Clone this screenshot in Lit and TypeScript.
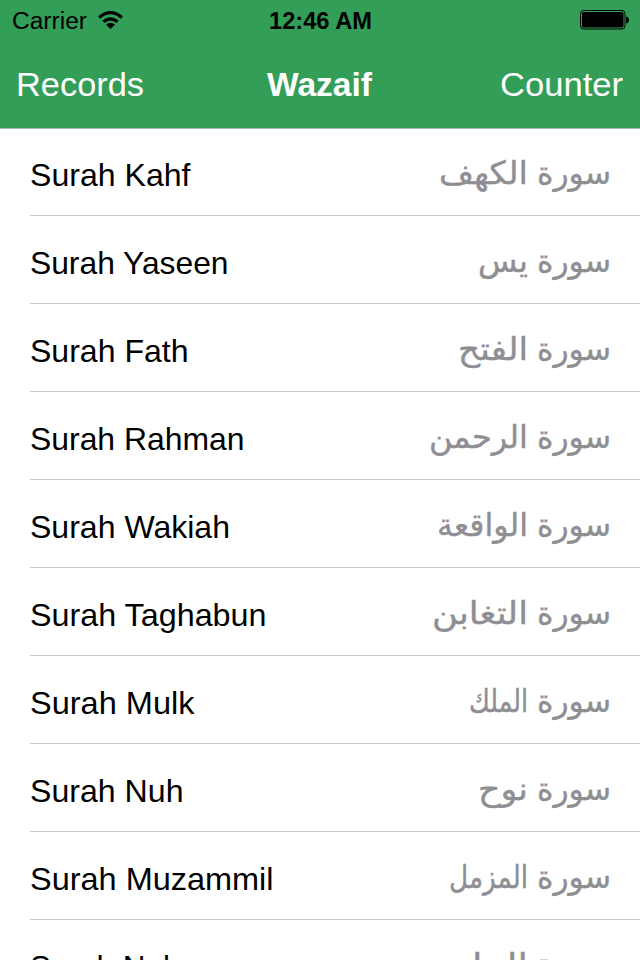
import { LitElement, html, css, svg } from "lit";
import { customElement } from "lit/decorators.js";

interface Surah {
  name: string;
  width: number;
  arabic: string;
  arabicWidth: number;
}

const SURAHS: Surah[] = [
  { name: "Surah Kahf", width: 160.5, arabic: "الكهف", arabicWidth: 89 },
  { name: "Surah Yaseen", width: 198.5, arabic: "يس", arabicWidth: 50 },
  { name: "Surah Fath", width: 158.5, arabic: "الفتح", arabicWidth: 70 },
  { name: "Surah Rahman", width: 214.5, arabic: "الرحمن", arabicWidth: 99 },
  { name: "Surah Wakiah", width: 200, arabic: "الواقعة", arabicWidth: 91 },
  { name: "Surah Taghabun", width: 236.5, arabic: "التغابن", arabicWidth: 96 },
  { name: "Surah Mulk", width: 164.5, arabic: "الملك", arabicWidth: 59 },
  { name: "Surah Nuh", width: 153.5, arabic: "نوح", arabicWidth: 50 },
  { name: "Surah Muzammil", width: 243.5, arabic: "المزمل", arabicWidth: 79 },
  { name: "Surah Naba", width: 168, arabic: "النبا", arabicWidth: 56 },
];

@customElement("app-root")
export class AppRoot extends LitElement {
  static styles = css`
    :host {
      display: flex;
      flex-direction: column;
      width: 640px;
      height: 960px;
      overflow: hidden;
      background: #fff;
      font-family: "Liberation Sans", Arial, sans-serif;
    }
    .top {
      flex: none;
      box-sizing: border-box;
      height: 129px;
      background: #339e57;
      border-bottom: 1px solid #a3b8a9;
    }
    .status {
      display: grid;
      grid-template-columns: 1fr auto 1fr;
      align-items: center;
      height: 40px;
      padding: 0 11px 0 12px;
      color: #000;
    }
    .carrier {
      display: flex;
      align-items: center;
      gap: 11px;
    }
    .battery {
      justify-self: end;
    }
    svg {
      display: block;
      flex: none;
    }
    .nav {
      display: grid;
      grid-template-columns: 1fr auto 1fr;
      height: 88px;
      padding: 0 17px 0 16px;
      color: #fff;
    }
    .list {
      flex: none;
    }
    .row {
      display: flex;
      justify-content: space-between;
      box-sizing: border-box;
      height: 88px;
      margin-left: 30px;
      padding-right: 30px;
      border-bottom: 1px solid #c8c7cc;
    }
    .row:first-child {
      height: 87px;
    }
    .row:first-child svg {
      margin-top: -1px;
    }
    .latin {
      font-family: "Liberation Sans", Arial, sans-serif;
    }
    .arabic {
      font-family: "DejaVu Sans", sans-serif;
      font-size: 32px;
      fill: #8e8e93;
      stroke: #8e8e93;
      stroke-width: 0.4px;
      direction: rtl;
    }
    .name {
      font-size: 32px;
      fill: #000;
    }
    .item {
      font-size: 34px;
      fill: #fff;
    }
    .title {
      font-size: 34px;
      font-weight: 700;
      fill: #fff;
    }
    .time {
      font-size: 23.5px;
      font-weight: 700;
      fill: #000;
    }
    .label {
      font-size: 23.5px;
      fill: #000;
    }
    .end {
      justify-self: end;
    }
  `;

  private label(text: string, cls: string, width: number, height: number, baseline: number) {
    return html`<svg width=${width} height=${height} overflow="visible">
      ${svg`<text class="latin ${cls}" x="0" y=${baseline} textLength=${width} lengthAdjust="spacingAndGlyphs">${text}</text>`}
    </svg>`;
  }

  private row(s: Surah) {
    return html`<div class="row">
      ${this.label(s.name, "name", s.width, 87, 58)}
      <svg width="190" height="87" overflow="visible">
        ${svg`<text class="arabic" x="191" y="56" textLength="74" lengthAdjust="spacingAndGlyphs">سورة</text>
        <text class="arabic" x="108" y="56" textLength=${s.arabicWidth} lengthAdjust="spacingAndGlyphs">${s.arabic}</text>`}
      </svg>
    </div>`;
  }

  render() {
    return html`
      <header class="top">
        <div class="status">
          <div class="carrier">
            ${this.label("Carrier", "label", 75, 40, 29)}
            <svg width="25" height="18" viewBox="0 0 25 18">
              <g fill="none" stroke="#000" stroke-width="3.2">
                <path d="M1.2 6.4 Q12.5 -3 23.8 6.4" />
                <path d="M5.4 10.8 Q12.5 4.8 19.6 10.8" />
              </g>
              <path d="M8 13.6 Q12.5 9.8 17 13.6 L12.5 18 Z" />
            </svg>
          </div>
          ${this.label("12:46 AM", "time", 103, 40, 29)}
          <svg class="battery" width="49" height="20" viewBox="0 0 49 20">
            <rect x="0.5" y="0.5" width="44.5" height="18.5" rx="3" fill="none" stroke="#000" />
            <rect x="2" y="2" width="41.5" height="15.5" rx="1.6" />
            <path d="M46 6.5 Q49 7 49 10 Q49 13 46 13.5 Z" />
          </svg>
        </div>
        <nav class="nav">
          ${this.label("Records", "item", 128, 88, 56)}
          ${this.label("Wazaif", "title", 105, 88, 56)}
          <span class="end">${this.label("Counter", "item", 123, 88, 56)}</span>
        </nav>
      </header>
      <main class="list">${SURAHS.map((s) => this.row(s))}</main>
    `;
  }
}
